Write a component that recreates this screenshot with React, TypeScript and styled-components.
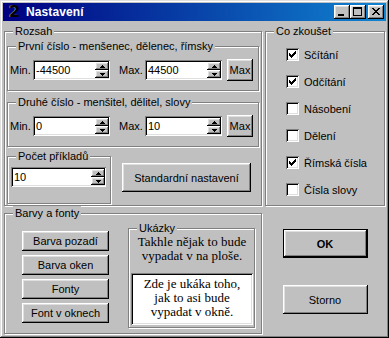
import React from "react";
import styled, { createGlobalStyle } from "styled-components";

const GlobalStyle = createGlobalStyle`
  html, body {
    margin: 0;
    padding: 0;
    background: #c0c0c0;
  }
  body {
    font-family: "Liberation Sans", Arial, sans-serif;
    font-size: 11px;
    color: #000;
  }
`;

const raised = `
  box-shadow: inset -1px -1px #000, inset 1px 1px #fff, inset -2px -2px #808080, inset 2px 2px #dfdfdf;
`;

const sunken = `
  box-shadow: inset 1px 1px #808080, inset -1px -1px #fff, inset 2px 2px #000, inset -2px -2px #dfdfdf;
`;

const Window = styled.div`
  width: 389px;
  height: 338px;
  box-sizing: border-box;
  padding: 3px;
  background: #c0c0c0;
  box-shadow: inset -1px -1px #000, inset 1px 1px #dfdfdf, inset -2px -2px #808080, inset 2px 2px #fff;
  display: flex;
  flex-direction: column;
`;

const TitleBar = styled.div`
  height: 18px;
  flex: none;
  display: flex;
  align-items: center;
  padding: 0 2px 0 5px;
  background: linear-gradient(90deg, #000080, #1084d0);
`;

const TitleIcon = styled.span`
  font-family: "DejaVu Sans", "Liberation Sans", sans-serif;
  font-weight: bold;
  font-size: 16px;
  line-height: 16px;
  width: 17px;
  padding-left: 1px;
  color: #000;
  text-shadow: -1px 0 #7080b0;
`;

const TitleText = styled.span`
  flex: 1;
  color: #fff;
  font-weight: bold;
  font-size: 12px;
  letter-spacing: 0.1px;
`;

const TitleButton = styled.div<{ $gap?: number }>`
  width: 16px;
  height: 14px;
  margin-left: ${(p) => p.$gap ?? 0}px;
  background: #c0c0c0;
  ${raised}
  svg {
    display: block;
  }
`;

const Body = styled.div`
  display: flex;
  gap: 3px;
  padding-left: 1px;
`;

const Column = styled.div<{ $w: number }>`
  width: ${(p) => p.$w}px;
  display: flex;
  flex-direction: column;
`;

const Group = styled.fieldset<{ $w?: number; $h: number; $mt?: number; $ml?: number; $pr?: number }>`
  margin: ${(p) => p.$mt ?? 0}px 0 0 ${(p) => p.$ml ?? 0}px;
  padding: 0 ${(p) => p.$pr ?? 2}px 0 2px;
  min-width: 0;
  width: ${(p) => (p.$w ? `${p.$w}px` : "auto")};
  height: ${(p) => p.$h}px;
  box-sizing: border-box;
  border: 1px solid #808080;
  box-shadow: inset 1px 1px #fff, 1px 1px #fff;
  flex: none;
`;

const Legend = styled.legend`
  padding: 0 2px;
  margin-left: 6px;
  height: 14px;
  line-height: 14px;
  background: #c0c0c0;
  white-space: nowrap;
`;

const Row = styled.div<{ $pt: number }>`
  display: flex;
  align-items: center;
  height: 22px;
  margin-top: ${(p) => p.$pt}px;
`;

const FieldLabel = styled.span<{ $w: number; $ml?: number }>`
  width: ${(p) => p.$w}px;
  margin-left: ${(p) => p.$ml ?? 0}px;
  flex: none;
`;

const SpinBox = styled.div<{ $w: number; $ml?: number; $mt?: number }>`
  width: ${(p) => p.$w}px;
  height: 20px;
  margin: ${(p) => p.$mt ?? 0}px 0 0 ${(p) => p.$ml ?? 0}px;
  box-sizing: border-box;
  padding: 2px 1px 2px 2px;
  background: #fff;
  ${sunken}
  display: flex;
  flex: none;
`;

const SpinText = styled.span`
  flex: 1;
  padding-left: 1px;
  line-height: 16px;
`;

const SpinButtons = styled.div`
  width: 14px;
  display: flex;
  flex-direction: column;
`;

const SpinHalf = styled.div`
  flex: 1;
  background: #c0c0c0;
  ${raised}
  display: flex;
  align-items: center;
  justify-content: center;
  svg {
    display: block;
  }
`;

const Button = styled.button<{ $w: number; $h: number; $ml?: number; $mt?: number; $default?: boolean }>`
  width: ${(p) => p.$w}px;
  height: ${(p) => p.$h}px;
  margin: ${(p) => p.$mt ?? 0}px 0 0 ${(p) => p.$ml ?? 0}px;
  padding: 0;
  border: none;
  flex: none;
  background: #c0c0c0;
  font-family: "Liberation Sans", Arial, sans-serif;
  font-size: 11px;
  color: #000;
  ${raised}
  ${(p) =>
    p.$default &&
    `
    font-weight: bold;
    box-shadow: inset 0 0 0 1px #000, inset -2px -2px #000, inset 2px 2px #fff, inset -3px -3px #808080, inset 3px 3px #dfdfdf;
  `}
`;

const BottomRow = styled.div`
  display: flex;
  align-items: flex-start;
  margin-top: 2px;
`;

const CheckList = styled.div`
  margin-top: 3px;
  display: flex;
  flex-direction: column;
`;

const CheckRow = styled.label`
  height: 27px;
  display: flex;
  align-items: center;
  padding-left: 18px;
`;

const CheckBox = styled.span`
  width: 13px;
  height: 13px;
  box-sizing: border-box;
  padding: 3px;
  background: #fff;
  ${sunken}
  margin-right: 5px;
  svg {
    display: block;
  }
`;

const ColorsContent = styled.div`
  display: flex;
  align-items: flex-start;
`;

const ButtonStack = styled.div`
  display: flex;
  flex-direction: column;
  gap: 4px;
  margin: 11px 0 0 15px;
`;

const Caption = styled.div`
  font-family: "Liberation Serif", "Times New Roman", serif;
  font-size: 13px;
  line-height: 14px;
  text-align: center;
`;

const Preview = styled.div`
  margin-top: 10px;
  height: 52px;
  box-sizing: border-box;
  padding-top: 4px;
  background: #fff;
  ${sunken}
  font-family: "Liberation Serif", "Times New Roman", serif;
  font-size: 13px;
  line-height: 14px;
  text-align: center;
`;

const DialogButtons = styled.div`
  display: flex;
  flex-direction: column;
  align-items: center;
`;

const Pixels = ({ rows, w, h }: { rows: [number, number, number][]; w: number; h: number }) => (
  <svg width={w} height={h} viewBox={`0 0 ${w} ${h}`} shapeRendering="crispEdges">
    {rows.map(([y, x, len], i) => (
      <rect key={i} x={x} y={y} width={len} height={1} fill="#000" />
    ))}
  </svg>
);

const CHECK: [number, number, number][] = [
  [0, 6, 1], [1, 5, 2], [2, 0, 1], [2, 4, 3], [3, 0, 2], [3, 3, 3], [4, 0, 5], [5, 1, 3], [6, 2, 1],
];
const UP: [number, number, number][] = [[0, 2, 1], [1, 1, 3], [2, 0, 5]];
const DOWN: [number, number, number][] = [[0, 0, 5], [1, 1, 3], [2, 2, 1]];
const CLOSE: [number, number, number][] = [
  [3, 4, 2], [3, 10, 2], [4, 5, 2], [4, 9, 2], [5, 6, 4], [6, 7, 2], [7, 6, 4], [8, 5, 2], [8, 9, 2], [9, 4, 2], [9, 10, 2],
];
const MIN: [number, number, number][] = [[9, 4, 6], [10, 4, 6]];
const MAX: [number, number, number][] = [
  [2, 3, 9], [3, 3, 9], [4, 3, 1], [4, 11, 1], [5, 3, 1], [5, 11, 1], [6, 3, 1], [6, 11, 1],
  [7, 3, 1], [7, 11, 1], [8, 3, 1], [8, 11, 1], [9, 3, 1], [9, 11, 1], [10, 3, 9],
];

const Spin = ({ value, w, ml, mt }: { value: string; w: number; ml?: number; mt?: number }) => (
  <SpinBox $w={w} $ml={ml} $mt={mt}>
    <SpinText>{value}</SpinText>
    <SpinButtons>
      <SpinHalf>
        <Pixels rows={UP} w={5} h={3} />
      </SpinHalf>
      <SpinHalf>
        <Pixels rows={DOWN} w={5} h={3} />
      </SpinHalf>
    </SpinButtons>
  </SpinBox>
);

const RangeRow = ({ min, max }: { min: string; max: string }) => (
  <Row $pt={6}>
    <FieldLabel $w={23}>Min.</FieldLabel>
    <Spin value={min} w={77} />
    <FieldLabel $w={26} $ml={9}>
      Max.
    </FieldLabel>
    <Spin value={max} w={77} />
    <Button $w={26} $h={22} $ml={5}>
      Max
    </Button>
  </Row>
);

const options: [string, boolean][] = [
  ["Sčítání", true],
  ["Odčítání", true],
  ["Násobení", false],
  ["Dělení", false],
  ["Římská čísla", true],
  ["Čísla slovy", false],
];

export default function App() {
  return (
    <>
      <GlobalStyle />
      <Window>
        <TitleBar>
          <TitleIcon>2</TitleIcon>
          <TitleText>Nastavení</TitleText>
          <TitleButton>
            <Pixels rows={MIN} w={16} h={14} />
          </TitleButton>
          <TitleButton>
            <Pixels rows={MAX} w={16} h={14} />
          </TitleButton>
          <TitleButton $gap={2}>
            <Pixels rows={CLOSE} w={16} h={14} />
          </TitleButton>
        </TitleBar>
        <Body>
          <Column $w={258}>
            <Group $h={182} $mt={3}>
              <Legend>Rozsah</Legend>
              <Group $h={52} $mt={1}>
                <Legend>První číslo - menšenec, dělenec, římsky</Legend>
                <RangeRow min="-44500" max="44500" />
              </Group>
              <Group $h={52} $mt={4}>
                <Legend>Druhé číslo - menšitel, dělitel, slovy</Legend>
                <RangeRow min="0" max="10" />
              </Group>
              <BottomRow>
                <Group $w={104} $h={55}>
                  <Legend>Počet příkladů</Legend>
                  <Spin value="10" w={95} ml={1} mt={4} />
                </Group>
                <Button $w={129} $h={29} $ml={11} $mt={14}>
                  Standardní nastavení
                </Button>
              </BottomRow>
            </Group>
            <Group $h={128}>
              <Legend>Barvy a fonty</Legend>
              <ColorsContent>
                <ButtonStack>
                  <Button $w={87} $h={20}>Barva pozadí</Button>
                  <Button $w={87} $h={20}>Barva oken</Button>
                  <Button $w={87} $h={20}>Fonty</Button>
                  <Button $w={87} $h={20}>Font v oknech</Button>
                </ButtonStack>
                <Group $w={127} $h={107} $mt={1} $ml={19} $pr={1}>
                  <Legend>Ukázky</Legend>
                  <Caption>
                    Takhle nějak to bude
                    <br />
                    vypadat v na ploše.
                  </Caption>
                  <Preview>
                    Zde je ukáka toho,
                    <br />
                    jak to asi bude
                    <br />
                    vypadat v okně.
                  </Preview>
                </Group>
              </ColorsContent>
            </Group>
          </Column>
          <Column $w={120}>
            <Group $h={182} $mt={3}>
              <Legend>Co zkoušet</Legend>
              <CheckList>
                {options.map(([label, checked]) => (
                  <CheckRow key={label}>
                    <CheckBox>{checked && <Pixels rows={CHECK} w={7} h={7} />}</CheckBox>
                    {label}
                  </CheckRow>
                ))}
              </CheckList>
            </Group>
            <DialogButtons>
              <Button $w={85} $h={29} $mt={23} $default>
                OK
              </Button>
              <Button $w={85} $h={29} $mt={27}>
                Storno
              </Button>
            </DialogButtons>
          </Column>
        </Body>
      </Window>
    </>
  );
}
